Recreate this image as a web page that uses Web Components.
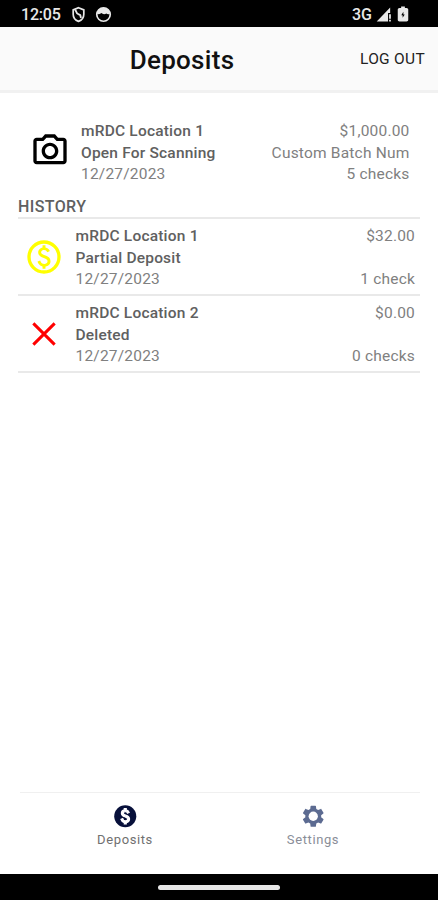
<!DOCTYPE html>
<html lang="en">
<head>
<meta charset="utf-8">
<title>Deposits</title>
<style>
  body {
    margin: 0;
    background: #fff;
    font-family: Roboto, "Liberation Sans", sans-serif;
  }
</style>
</head>
<body>
<deposits-app></deposits-app>

<script>
const DOLLAR = "M12.88 17.76V19h-1.75v-1.29c-.74-.18-2.39-.77-3.02-2.96l1.65-.67c.06.22.58 2.09 2.4 2.09.93 0 1.98-.48 1.98-1.61 0-.96-.7-1.46-2.28-2.03-1.1-.39-3.35-1.03-3.35-3.31 0-.1.01-2.4 2.62-2.96V5h1.75v1.24c1.84.32 2.51 1.79 2.66 2.23l-1.58.67c-.11-.35-.59-1.34-1.9-1.34-.7 0-1.81.37-1.81 1.39 0 .95.86 1.31 2.64 1.9 2.4.83 3.01 2.05 3.01 3.45 0 2.63-2.5 3.13-3.02 3.22z";

const ICONS = {
  camera: `<path d="M14.12 4l1.83 2H20v12H4V6h4.05l1.83-2h4.24M15 2H9L7.17 4H4c-1.1 0-2 .9-2 2v12c0 1.1.9 2 2 2h16c1.1 0 2-.9 2-2V6c0-1.1-.9-2-2-2h-3.17L15 2zm-3 5c-2.76 0-5 2.24-5 5s2.24 5 5 5 5-2.24 5-5-2.24-5-5-5zm0 8c-1.65 0-3-1.35-3-3s1.35-3 3-3 3 1.35 3 3-1.35 3-3 3z"/>`,
  paid: `<circle cx="12" cy="12" r="9" fill="none" stroke="currentColor" stroke-width="2"/><path d="${DOLLAR}"/>`,
  close: `<path d="M5.6 5.6l12.8 12.8M18.4 5.6L5.6 18.4" fill="none" stroke="currentColor" stroke-width="1.8"/>`,
  paidFilled: `<circle cx="12" cy="12" r="10"/><path d="${DOLLAR}" fill="#fff" stroke="#fff" stroke-width="1.1"/>`,
  settings: `<path d="M19.14 12.94c.04-.3.06-.61.06-.94 0-.32-.02-.64-.07-.94l2.03-1.58c.18-.14.23-.41.12-.61l-1.92-3.32c-.12-.22-.37-.29-.59-.22l-2.39.96c-.5-.38-1.03-.7-1.62-.94l-.36-2.54c-.04-.24-.24-.41-.48-.41h-3.84c-.24 0-.43.17-.47.41l-.36 2.54c-.59.24-1.13.57-1.62.94l-2.39-.96c-.22-.08-.47 0-.59.22L2.74 8.87c-.12.21-.08.47.12.61l2.03 1.58c-.05.3-.09.63-.09.94s.02.64.07.94l-2.03 1.58c-.18.14-.23.41-.12.61l1.92 3.32c.12.22.37.29.59.22l2.39-.96c.5.38 1.03.7 1.62.94l.36 2.54c.05.24.24.41.48.41h3.84c.24 0 .44-.17.47-.41l.36-2.54c.59-.24 1.13-.56 1.62-.94l2.39.96c.22.08.47 0 .59-.22l1.92-3.32c.12-.22.07-.47-.12-.61l-2.01-1.58z"/><circle cx="12" cy="12" r="4.2" fill="#fff"/>`,
  shield: `<path d="M12 2.5l7.5 3v6c0 5-3.2 8.5-7.5 10.2C7.7 20 4.5 16.5 4.5 11.5v-6z" fill="none" stroke="currentColor" stroke-width="2.4"/><path d="M7.5 5.5l2.5 5 4.5 2.5 1 4" fill="none" stroke="currentColor" stroke-width="2.6"/>`,
  face: `<circle cx="12" cy="12" r="9.5" fill="none" stroke="currentColor" stroke-width="2.4"/><path d="M3 11V8.5C5 4.500 8 2.500 12 2.500s7 2 9 6V11c-2 1.500-4 .5-5-.5-2 1.500-5 1.500-7-.5-1.500 1.500-4 2-6 1z"/>`,
  signal: `<path d="M1 22L20 2v8h-3v12z"/><path d="M18.5 11.5h2.5v6.5h-2.5zM18.5 19.5h2.5V22h-2.5z"/>`,
  battery: `<path fill-rule="evenodd" d="M16.7 4H14.5V2h-5v2H7.3C6 4 5 5 5 6.3v13.400C5 21 6 22 7.300 22h9.400c1.300 0 2.300-1 2.300-2.300V6.300C19 5 18 4 16.700 4zM12.500 9v3.500h1.800L11.500 17v-3.500H9.700z"/>`
};

class AppIcon extends HTMLElement {
  constructor() {
    super();
    this.attachShadow({ mode: "open" });
  }

  connectedCallback() {
    this.shadowRoot.innerHTML = `
      <style>
        :host { display: block; flex: none; width: var(--size, 24px); height: var(--size, 24px); }
        svg { display: block; width: 100%; height: 100%; fill: currentColor; }
      </style>
      <svg viewBox="0 0 24 24" aria-hidden="true">${ICONS[this.getAttribute("name")]}</svg>
    `;
  }
}

class StatusBar extends HTMLElement {
  constructor() {
    super();
    this.attachShadow({ mode: "open" });
    this.shadowRoot.innerHTML = `
      <style>
        :host {
          display: flex;
          align-items: center;
          box-sizing: border-box;
          height: 27px;
          padding: 1px 26px 0 21px;
          background: #000;
          color: #e8e8e8;
          font-size: 16px;
          font-weight: 500;
          --size: 17px;
        }
        .time { width: 49px; letter-spacing: -0.2px; }
        .face { margin-left: 8px; }
        .network { margin-left: auto; margin-right: 4px; }
        .battery { --size: 18px; margin-left: 1px; }
      </style>
      <span class="time">12:05</span>
      <app-icon name="shield"></app-icon>
      <app-icon class="face" name="face"></app-icon>
      <span class="network">3G</span>
      <app-icon name="signal"></app-icon>
      <app-icon class="battery" name="battery"></app-icon>
    `;
  }
}

class AppHeader extends HTMLElement {
  constructor() {
    super();
    this.attachShadow({ mode: "open" });
    this.shadowRoot.innerHTML = `
      <style>
        :host {
          display: grid;
          grid-template-columns: 1fr auto 1fr;
          align-items: center;
          box-sizing: border-box;
          height: 66px;
          padding: 2px 13px 0;
          background: #fafafa;
          border-bottom: 3px solid #f1f1f1;
          color: #111;
        }
        h1 {
          grid-column: 2;
          margin: 0 74px 0 0;
          font-size: 26px;
          line-height: 30px;
          font-weight: 500;
          letter-spacing: 0.3px;
        }
        button {
          justify-self: end;
          padding: 0 0 2px;
          border: 0;
          background: none;
          color: #222;
          font: 400 15.5px Roboto, sans-serif;
          letter-spacing: 0.3px;
          white-space: nowrap;
        }
      </style>
      <h1><slot></slot></h1>
      <button>LOG OUT</button>
    `;
  }
}

class DepositItem extends HTMLElement {
  constructor() {
    super();
    this.attachShadow({ mode: "open" });
  }

  set deposit(deposit) {
    this.data = deposit;
    this.render();
  }

  render() {
    const { icon, color, location, status, date, amount, batch, checks } = this.data;

    this.shadowRoot.innerHTML = `
      <style>
        :host {
          display: flex;
          align-items: center;
          box-sizing: border-box;
          height: 77px;
          padding: 1px 5px 0 6px;
          color: #808080;
          font-size: 15.5px;
          line-height: 21.5px;
          letter-spacing: 0.2px;
          border-bottom: 2px solid #e9e9e9;
        }
        app-icon { --size: 40px; color: ${color}; }
        .info { flex: 1; margin-left: 11.5px; }
        .strong { color: #606060; font-weight: 500; }
        .totals { text-align: right; }
        .info, .totals { padding-top: var(--text-offset, 3px); }
        .info div, .totals div { height: 21.5px; white-space: nowrap; }
      </style>
      <app-icon name="${icon}"></app-icon>
      <div class="info">
        <div class="strong">${location}</div>
        <div class="strong">${status}</div>
        <div>${date}</div>
      </div>
      <div class="totals">
        <div>${amount}</div>
        <div>${batch}</div>
        <div>${checks}</div>
      </div>
    `;
  }
}

class DepositList extends HTMLElement {
  constructor() {
    super();
    this.attachShadow({ mode: "open" });
    this.current = {
      icon: "camera", color: "#000", location: "mRDC Location 1", status: "Open For Scanning",
      date: "12/27/2023", amount: "$1,000.00", batch: "Custom Batch Num", checks: "5 checks"
    };
    this.history = [
      {
        icon: "paid", color: "#ffff00", location: "mRDC Location 1", status: "Partial Deposit",
        date: "12/27/2023", amount: "$32.00", batch: "", checks: "1 check"
      },
      {
        icon: "close", color: "#ff0000", location: "mRDC Location 2", status: "Deleted",
        date: "12/27/2023", amount: "$0.00", batch: "", checks: "0 checks"
      }
    ];
  }

  connectedCallback() {
    this.render();
  }

  render() {
    this.shadowRoot.innerHTML = `
      <style>
        :host { display: block; padding: 20px 18px 0; }
        .current { --text-offset: 5px; margin: 0 5.5px; border-bottom-color: transparent; }
        h2 {
          box-sizing: border-box;
          height: 29px;
          margin: 0;
          padding-top: 7px;
          border-bottom: 2px solid #e9e9e9;
          color: #606060;
          font-size: 16px;
          line-height: 20px;
          font-weight: 500;
          letter-spacing: 0.4px;
        }
      </style>
      <deposit-item class="current"></deposit-item>
      <h2>HISTORY</h2>
      ${this.history.map(() => `<deposit-item></deposit-item>`).join("")}
    `;

    const deposits = [this.current, ...this.history];
    this.shadowRoot.querySelectorAll("deposit-item").forEach((item, index) => {
      item.deposit = deposits[index];
    });
  }
}

class TabItem extends HTMLElement {
  constructor() {
    super();
    this.attachShadow({ mode: "open" });
  }

  connectedCallback() {
    this.shadowRoot.innerHTML = `
      <style>
        :host {
          display: flex;
          flex-direction: column;
          align-items: center;
          color: #8a8e98;
          font-size: 13px;
          line-height: 16px;
          letter-spacing: 0.6px;
        }
        :host([active]) { color: #707070; }
        app-icon { --size: 26.5px; margin-bottom: 3px; color: #5c6b91; }
        :host([active]) app-icon { color: #07103a; }
      </style>
      <app-icon name="${this.getAttribute("icon")}"></app-icon>
      <span><slot></slot></span>
    `;
  }
}

class TabBar extends HTMLElement {
  constructor() {
    super();
    this.attachShadow({ mode: "open" });
    this.shadowRoot.innerHTML = `
      <style>
        :host {
          display: grid;
          grid-template-columns: 1fr 1fr;
          box-sizing: border-box;
          height: 82px;
          margin: 0 18px 0 20px;
          padding: 9.5px 13px 0 11px;
          border-top: 1px solid #f0f0f0;
        }
      </style>
      <slot></slot>
    `;
  }
}

class HomeIndicator extends HTMLElement {
  constructor() {
    super();
    this.attachShadow({ mode: "open" });
    this.shadowRoot.innerHTML = `
      <style>
        :host { display: flex; justify-content: center; align-items: center; height: 26px; background: #000; }
        span { width: 122px; height: 5px; border-radius: 3px; background: #e6e6e6; }
      </style>
      <span></span>
    `;
  }
}

class DepositsApp extends HTMLElement {
  constructor() {
    super();
    this.attachShadow({ mode: "open" });
    this.shadowRoot.innerHTML = `
      <style>
        :host { display: flex; flex-direction: column; height: 900px; }
        deposit-list { flex: 1; }
      </style>
      <status-bar></status-bar>
      <app-header>Deposits</app-header>
      <deposit-list></deposit-list>
      <tab-bar>
        <tab-item icon="paidFilled" active>Deposits</tab-item>
        <tab-item icon="settings">Settings</tab-item>
      </tab-bar>
      <home-indicator></home-indicator>
    `;
  }
}

customElements.define("app-icon", AppIcon);
customElements.define("status-bar", StatusBar);
customElements.define("app-header", AppHeader);
customElements.define("deposit-item", DepositItem);
customElements.define("deposit-list", DepositList);
customElements.define("tab-item", TabItem);
customElements.define("tab-bar", TabBar);
customElements.define("home-indicator", HomeIndicator);
customElements.define("deposits-app", DepositsApp);
</script>
</body>
</html>
